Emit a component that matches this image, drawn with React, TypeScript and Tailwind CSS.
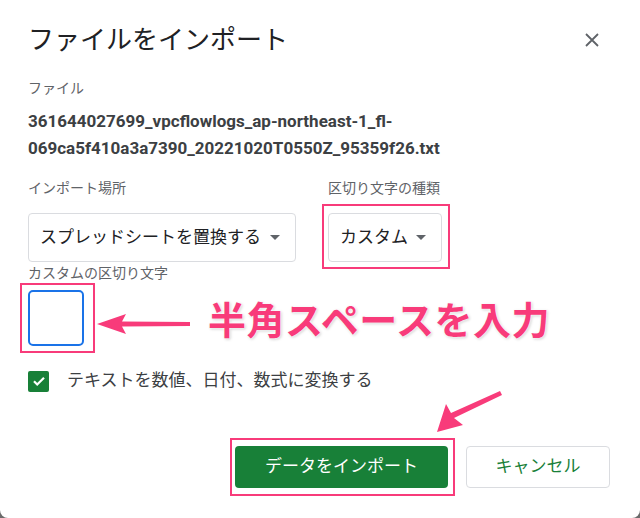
const PINK = "#f83b7a";

function Caret() {
  return (
    <svg width="10" height="5" viewBox="0 0 10 5" className="shrink-0">
      <path d="M0 0h10L5 5z" fill="#5f6368" />
    </svg>
  );
}

export default function App() {
  return (
    <div className="w-[640px] h-[518px] bg-[#6b6b6b] font-['Roboto','Noto_Sans_CJK_JP',sans-serif]">
      <div className="relative h-[518px] rounded-b-[8px] bg-white px-[28px] pt-[22px]">
        {/* header */}
        <div className="flex h-[36px] items-center justify-between">
          <h1 className="text-[26px] leading-[36px] font-normal text-[#202124]">ファイルをインポート</h1>
          <svg width="14" height="14" viewBox="0 0 14 14" className="mr-[13px]">
            <path d="M1 1l12 12M13 1L1 13" stroke="#5f6368" strokeWidth="1.8" />
          </svg>
        </div>

        <div className="mt-[20px] text-[14px] leading-[20px] text-[#5f6368]">ファイル</div>
        <div className="mt-[10px] text-[17px] leading-[27px] font-bold text-[#3c4043]">
          <div>361644027699_vpcflowlogs_ap-northeast-1_fl-</div>
          <div>069ca5f410a3a7390_20221020T0550Z_95359f26.txt</div>
        </div>

        {/* import location + separator type */}
        <div className="mt-[16px] flex gap-[32px]">
          <div className="flex flex-col">
            <span className="text-[14px] leading-[20px] text-[#5f6368]">インポート場所</span>
            <div className="mt-[15px] flex h-[49px] w-[268px] items-center justify-between rounded-[4px] border border-[#dadce0] pl-[11px] pr-[15px] text-[17px] text-[#202124]">
              <span>スプレッドシートを置換する</span>
              <Caret />
            </div>
          </div>
          <div className="flex flex-col">
            <span className="text-[14px] leading-[20px] text-[#5f6368]">区切り文字の種類</span>
            <div className="relative mt-[15px]">
              <div className="flex h-[49px] w-[114px] items-center justify-between rounded-[4px] border border-[#dadce0] pl-[11px] pr-[15px] text-[17px] text-[#202124]">
                <span>カスタム</span>
                <Caret />
              </div>
              <div className="pointer-events-none absolute -left-[6px] -right-[8px] -top-[9px] -bottom-[7px] border-2 border-[#f83b7a]" />
            </div>
          </div>
        </div>

        {/* custom separator */}
        <div className="mt-[1px] text-[14px] leading-[20px] text-[#5f6368]">カスタムの区切り文字</div>
        <div className="relative mt-[7px] h-[56px] w-[56px]">
          <div className="h-[56px] w-[56px] rounded-[5px] border-2 border-[#1a73e8] bg-white" />
          <div className="pointer-events-none absolute -left-[8px] -right-[11px] -top-[7px] -bottom-[7px] border-2 border-[#f83b7a]" />
        </div>

        {/* checkbox */}
        <div className="mt-[24px] flex h-[22px] items-center gap-[18px]">
          <div className="flex h-[21px] w-[21px] items-center justify-center rounded-[2px] bg-[#188038]">
            <svg width="14" height="14" viewBox="0 0 14 14">
              <path d="M2 7.3l3.2 3.2L12 3.7" fill="none" stroke="white" strokeWidth="2.2" />
            </svg>
          </div>
          <span className="text-[17px] text-[#3c4043]">テキストを数値、日付、数式に変換する</span>
        </div>

        {/* buttons */}
        <div className="mt-[54px] flex justify-end gap-[18px] pr-[2px]">
          <div className="relative">
            <button className="h-[42px] w-[213px] rounded-[4px] bg-[#188038] text-[17px] text-white">データをインポート</button>
            <div className="pointer-events-none absolute -left-[5px] -right-[7px] -top-[8px] -bottom-[8px] border-2 border-[#f83b7a]" />
          </div>
          <button className="h-[42px] w-[144px] rounded-[4px] border border-[#dadce0] bg-white text-[17px] text-[#188038]">キャンセル</button>
        </div>

        {/* annotations */}
        <svg className="pointer-events-none absolute left-[96px] top-[312px]" width="96" height="24" viewBox="0 0 96 24">
          <path d="M1 12L30 2L26 9.5L94 10L94 14L26 14.5L30 22Z" fill={PINK} />
        </svg>
        <div
          className="pointer-events-none absolute left-[208px] top-[296px] text-[38px] leading-[50px] font-bold tracking-[0.5px] text-[#f83b7a] [text-shadow:0_0_2px_#fff,0_0_3px_#fff,1px_1px_3px_rgba(0,0,0,0.25)]"
        >
          半角スペースを入力
        </div>
        <svg className="pointer-events-none absolute left-[432px] top-[388px]" width="74" height="50" viewBox="0 0 74 50">
          <path d="M5 44L14 16L19 25L68 3L70 7L22 30L31 37Z" fill={PINK} />
        </svg>
      </div>
    </div>
  );
}
